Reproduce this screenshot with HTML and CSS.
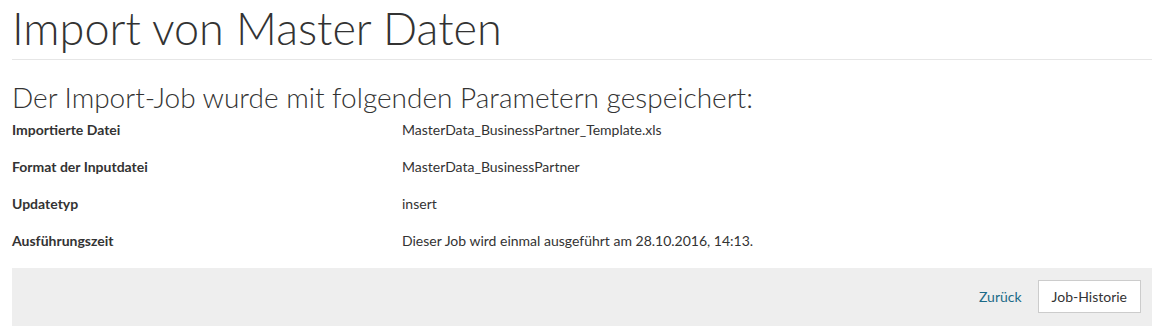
FILE: index.html
```html
<!DOCTYPE html>
<html lang="de">
<head>
    <meta charset="UTF-8">
    <title>Import von Master Daten</title>
    <link rel="stylesheet" href="styles.css">
</head>
<body>
    <div class="page">
        <h1 class="page-header">Import von Master Daten</h1>

        <h2>Der Import-Job wurde mit folgenden Parametern gespeichert:</h2>

        <!-- Job parameters -->
        <dl class="params">
            <dt>Importierte Datei</dt>
            <dd>MasterData_BusinessPartner_Template.xls</dd>

            <dt>Format der Inputdatei</dt>
            <dd>MasterData_BusinessPartner</dd>

            <dt>Updatetyp</dt>
            <dd>insert</dd>

            <dt>Ausführungszeit</dt>
            <dd>Dieser Job wird einmal ausgeführt am 28.10.2016, 14:13.</dd>
        </dl>

        <div class="form-actions">
            <a href="#" class="link-back">Zurück</a>
            <button type="button" class="btn">Job-Historie</button>
        </div>
    </div>
</body>
</html>
```

FILE: styles.css
```css
body {
    font-family: 'Lato', sans-serif;
    margin: 0;
    color: #333;
    background-color: #fff;
    font-size: 14px;
}

.page {
    margin: 0 9px 0 12px;
}

.page-header {
    font-size: 45px;
    font-weight: 300;
    margin: 0;
    padding: 3px 0 6px;
    line-height: 50px;
    border-bottom: 1px solid #e6e6e6;
}

h2 {
    font-size: 28px;
    font-weight: 300;
    margin: 20px 0 0;
    line-height: 34px;
}

.params {
    display: grid;
    grid-template-columns: 390px 1fr;
    grid-auto-rows: 37px;
    margin: 0;
    padding-top: 3px;
    line-height: 20px;
}

.params dt {
    font-weight: 700;
    padding-top: 3px;
}

.params dd {
    margin: 0;
    padding-top: 3px;
}

.form-actions {
    display: flex;
    justify-content: flex-end;
    align-items: center;
    gap: 16px;
    background-color: #eee;
    padding: 12px 11px 13px;
    margin-top: 3px;
}

.link-back {
    color: #1b6a87;
    text-decoration: none;
}

.btn {
    font-family: inherit;
    font-size: 14px;
    color: #333;
    background-color: #fff;
    border: 1px solid #ccc;
    padding: 0 13px;
    height: 33px;
    cursor: pointer;
}
```
